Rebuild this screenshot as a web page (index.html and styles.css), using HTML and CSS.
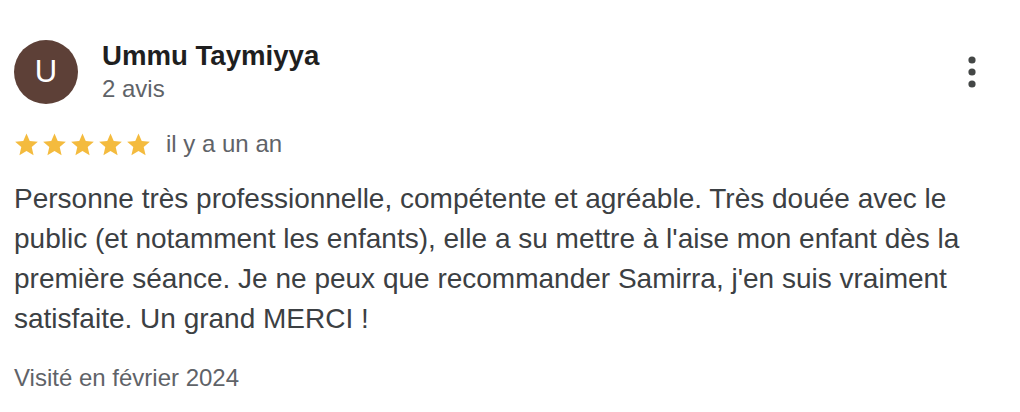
FILE: index.html
```html
<!DOCTYPE html>
<html lang="fr">
<head>
<meta charset="utf-8">
<link rel="stylesheet" href="styles.css">
</head>
<body>
<div class="review">
  <div class="header">
    <div class="avatar">U</div>
    <div class="who">
      <div class="name">Ummu Taymiyya</div>
      <div class="count">2 avis</div>
    </div>
    <div class="menu">
      <svg width="8" height="32" viewBox="0 0 8 32"><circle cx="4" cy="4" r="3.6" fill="#444746"/><circle cx="4" cy="16" r="3.6" fill="#444746"/><circle cx="4" cy="28" r="3.6" fill="#444746"/></svg>
    </div>
  </div>
  <div class="rating">
    <div class="stars">
      <svg viewBox="0 0 24 24" class="star"><path d="M12 1.5l3.1 7.2 7.8.7-5.9 5.1 1.8 7.7L12 18.2l-6.8 4 1.8-7.7-5.9-5.1 7.8-.7z"/></svg>
      <svg viewBox="0 0 24 24" class="star"><path d="M12 1.5l3.1 7.2 7.8.7-5.9 5.1 1.8 7.7L12 18.2l-6.8 4 1.8-7.7-5.9-5.1 7.8-.7z"/></svg>
      <svg viewBox="0 0 24 24" class="star"><path d="M12 1.5l3.1 7.2 7.8.7-5.9 5.1 1.8 7.7L12 18.2l-6.8 4 1.8-7.7-5.9-5.1 7.8-.7z"/></svg>
      <svg viewBox="0 0 24 24" class="star"><path d="M12 1.5l3.1 7.2 7.8.7-5.9 5.1 1.8 7.7L12 18.2l-6.8 4 1.8-7.7-5.9-5.1 7.8-.7z"/></svg>
      <svg viewBox="0 0 24 24" class="star"><path d="M12 1.5l3.1 7.2 7.8.7-5.9 5.1 1.8 7.7L12 18.2l-6.8 4 1.8-7.7-5.9-5.1 7.8-.7z"/></svg>
    </div>
    <span class="date">il y a un an</span>
  </div>
  <p class="text">Personne très professionnelle, compétente et agréable. Très douée avec le public (et notamment les enfants), elle a su mettre à l'aise mon enfant dès la première séance. Je ne peux que recommander Samirra, j'en suis vraiment satisfaite. Un grand MERCI !</p>
  <div class="visit">Visité en février 2024</div>
</div>
</body>
</html>
```
FILE: styles.css
```css
* { box-sizing: border-box; }
html, body { margin: 0; padding: 0; background: #fff; }
body { font-family: "Liberation Sans", Arial, sans-serif; }
.review { width: 1020px; padding: 40px 14px 0 14px; }
.header { display: flex; align-items: flex-start; }
.avatar {
  width: 64px; height: 64px; border-radius: 50%;
  background: #5d4037; color: #fff;
  display: flex; align-items: center; justify-content: center;
  font-size: 31px; flex: none;
}
.who { margin-left: 24px; flex: 1; }
.name { font-size: 27.6px; font-weight: bold; color: #1f1f1f; line-height: 32px; }
.count { font-size: 24px; color: #5f6368; line-height: 28px; margin-top: 3px; }
.menu { padding: 16px 30px 0 0; display: flex; }
.rating { display: flex; align-items: center; margin-top: 26px; height: 28px; }
.stars { display: flex; gap: 3px; }
.star { width: 25px; height: 25px; fill: #f4bb3e; display: block; }
.date { margin-left: 15px; font-size: 24px; color: #5f6368; line-height: 28px; }
.text {
  margin: 21px 0 0 0; font-size: 28px; line-height: 40px; color: #3c4043;
  width: 1000px;
}
.visit { margin-top: 25px; font-size: 24px; line-height: 28px; color: #5f6368; }
```
